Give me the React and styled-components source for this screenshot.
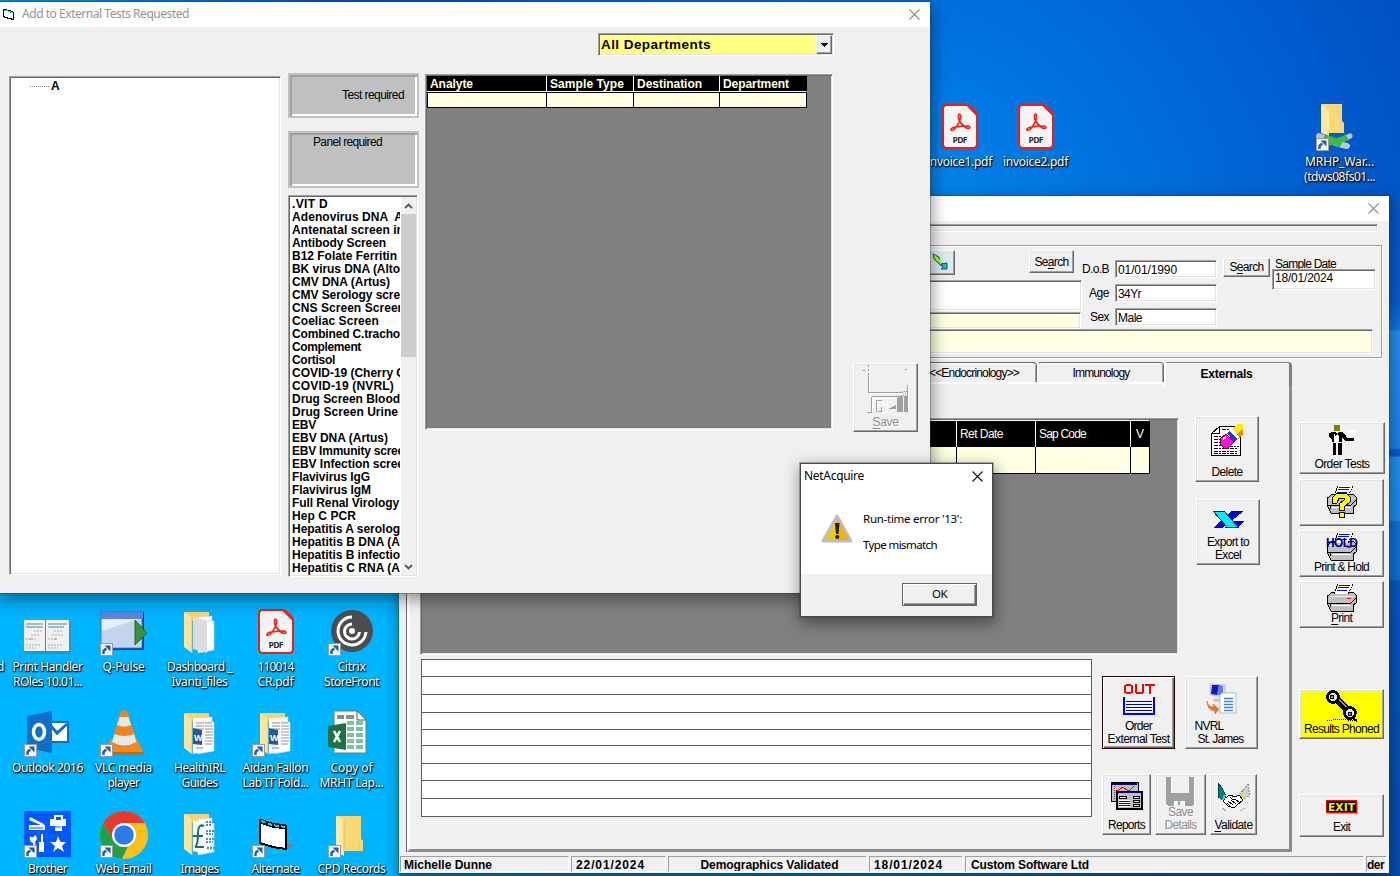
import React, { useLayoutEffect, useRef } from "react";
import styled, { createGlobalStyle, css } from "styled-components";

const sans = `"Liberation Sans", Arial, sans-serif`;
const ui = `"Noto Sans", "Open Sans", sans-serif`;

const Global = createGlobalStyle`
  * { box-sizing: border-box; }
  html, body { margin: 0; padding: 0; overflow: hidden; }
  body { font-family: ${sans}; font-size: 12px; line-height: 13px; color: #000; }
  svg { display: block; flex: none; }
`;

/* ---------- text ---------- */

const FitText = styled.span`
  display: inline-block;
  width: max-content;
  white-space: pre;
  flex: none;
`;

// Spreads its characters so that the text takes the given width.
function Fit({ w, children }) {
  const ref = useRef(null);
  useLayoutEffect(() => {
    const el = ref.current;
    el.style.letterSpacing = "0px";
    const natural = el.getBoundingClientRect().width;
    el.style.letterSpacing = `${(w - natural) / el.textContent.length}px`;
  }, [w, children]);
  return <FitText ref={ref}>{children}</FitText>;
}

/* ---------- shared looks ---------- */

const raised = css`
  border: 1px solid;
  border-color: #fff #696969 #696969 #fff;
  box-shadow: inset -1px -1px #a0a0a0, inset 1px 1px #e3e3e3;
`;
const sunken = css`
  border: 1px solid;
  border-color: #a0a0a0 #fff #fff #a0a0a0;
  box-shadow: inset 1px 1px #696969, inset -1px -1px #e3e3e3;
`;

/* ---------- desktop ---------- */

const Desktop = styled.div`
  position: relative;
  width: 1400px;
  height: 876px;
  overflow: hidden;
  background:
    linear-gradient(180deg, #0058cc 0, #0060d8 105px, #0a7ae6 134px, #1f94f2 135px, #1488ee 252px, #005fd6 254px 260px, #1a94f2 261px, #1a90ee 324px, #0b74dd 326px 384px, #005cc4 385px, #0050b4 680px) 1389px 196px / 11px 680px no-repeat,
    linear-gradient(90deg, #0088c4 0, #0078b8 500px, #004fb0 990px) 399px 872px / 1001px 4px no-repeat,
    linear-gradient(180deg, #00acf6 0, #00b5ff 40px) 0 590px / 400px 286px no-repeat,
    radial-gradient(circle at 880px 260px, #008cee, #0072de 240px, #005ed0 440px, #0050c4 580px, #0090dc 860px);
`;

const IconGrid = styled.div`
  position: absolute;
  left: ${(p) => p.$x}px;
  top: ${(p) => p.$y}px;
  display: grid;
  grid-template-columns: repeat(${(p) => p.$cols}, 76px);
  grid-auto-rows: 101px;
`;

const Shortcut = styled.div`
  display: flex;
  flex-direction: column;
  align-items: center;
  padding-top: 2px;
`;

const IconBox = styled.div`
  position: relative;
  height: 51px;
  margin-bottom: -1px;
`;

const Badge = styled.div`
  position: absolute;
  left: 0;
  top: 34px;
`;

const Caption = styled.div`
  display: flex;
  flex-direction: column;
  align-items: ${(p) => (p.$end ? "flex-end" : "center")};
  width: 76px;
  padding-right: ${(p) => (p.$end ? 7 : 1)}px;
  font: 12px/15px ${ui};
  color: #fff;
  text-shadow: 1px 1px 1px #000, 0 1px 2px rgba(0, 0, 0, 0.85), 0 0 2px rgba(0, 0, 0, 0.4);
`;

const ShortcutArrow = () => (
  <Badge>
    <svg width="13" height="13">
      <rect x=".5" y=".5" width="12" height="12" fill="#f4f6f8" stroke="#9a9a9a" />
      <path d="M3.500 11V9Q3.500 6.500 6.500 6" fill="none" stroke="#2a5a9e" strokeWidth="2.400" />
      <path d="M4.500 2.500H10.500V8.500Z" fill="#2a5a9e" />
    </svg>
  </Badge>
);

function DesktopIcon({ icon, lines = [], link, end }) {
  return (
    <Shortcut>
      <IconBox>
        <svg width="48" height="48" viewBox="0 0 48 48">{icon}</svg>
        {link && <ShortcutArrow />}
      </IconBox>
      <Caption $end={end}>
        {lines.map(([text, w]) => <Fit key={text} w={w}>{text}</Fit>)}
      </Caption>
    </Shortcut>
  );
}

const pdf = (
  <g>
    <path d="M11 1H31L41 11V40Q41 44 37 44H11Q7 44 7 40V5Q7 1 11 1Z" fill="#f5f5f5" stroke="#f21d12" strokeWidth="2" />
    <path d="M31 1L41 11V8L34 1Z" fill="#f21d12" />
    <path d="M15 26C14 23 25 22 32 22C36 23 33 26 29 23C24 19 22 15 22.500 11.500C23 9 25.500 10 24.500 14C23.500 19 18 28 15 26Z" fill="none" stroke="#f0261c" strokeWidth="1.700" />
    <text x="24" y="39" textAnchor="middle" fontFamily="Open Sans, sans-serif" fontWeight="700" fontSize="8.500" textLength="15" fill="#2b2b2b">PDF</text>
  </g>
);

const folder = (
  <g>
    <path d="M8 5H33V28L35 30V40H15Z" fill="#f8d775" />
    <path d="M8 5L16 9V45L8 40Z" fill="#ffe9a6" />
    <path d="M16 9V41" stroke="#e3bd58" />
  </g>
);

const openFolder = (inner) => (
  <g>
    <path d="M8 3H33V12H16Z" fill="#f5d273" />
    <path d="M22 8L36 7V41L22 44Z" fill="#fafafa" stroke="#c9d4da" strokeWidth=".6" />
    <path d="M25 12H38V41L25 43Z" fill="#fff" stroke="#cfd6da" strokeWidth=".6" />
    {inner}
    <path d="M8 3L16 8V44L8 38Z" fill="#ffe39a" />
    <path d="M16 8V44" stroke="#e0b956" strokeWidth=".8" />
  </g>
);

const docLines = (
  <g>
    <path d="M17 8H28V42L17 44Z" fill="#f7f7f7" />
    <path d="M20 13H28M20 16H28M20 19H28M29 13H36M29 16H37M29 19H37M29 22H37M29 25H37M29 28H37M29 31H37M29 34H36M20 38H27" stroke="#777" strokeWidth=".8" />
    <path d="M17 18L26 20V35L17 34Z" fill="#2b579a" />
    <text x="18" y="31" fontFamily="Open Sans, sans-serif" fontWeight="700" fontSize="9" textLength="7" fill="#fff">W</text>
  </g>
);

const art = {
  none: null,
  pdf,
  folder,
  network: (
    <g>
      <path d="M5 0H26V17L28 19V29H12Z" fill="#f9d87a" />
      <path d="M5 0L13 5V32L5 29Z" fill="#ffe8a0" />
      <path d="M3 32L14 36Q20 40 31 42" stroke="#bcc6cd" strokeWidth="6" strokeLinecap="round" fill="none" />
      <path d="M8 39Q24 38 34 32" stroke="#bcc6cd" strokeWidth="5" strokeLinecap="round" fill="none" />
      <path d="M8 33L16 36Q21 39 25 41M10 39Q22 38 31 33" stroke="#36bd3e" strokeWidth="6" fill="none" />
    </g>
  ),
  handler: (
    <g>
      <rect x="1" y="12" width="46" height="33" fill="#4c7484" opacity=".4" />
      <path d="M0 11H21V42H0ZM22 11H45V42H22Z" fill="#f0f0f0" />
      <path d="M2 15H19M24 15H43M2 18H19M24 18H40" stroke="#9fbccb" strokeWidth="2" />
      <path d="M10 22H18M7 26H16M2 30H12M30 22H38M28 26H40M24 30H33M24 36H38M2 36H16M2 39H12M24 39H34" stroke="#aaa" strokeWidth="1" strokeDasharray="2 1" />
      <path d="M5 30H8M30 30H33" stroke="#7c3" />
    </g>
  ),
  pulse: (
    <g>
      <rect x="1" y="3" width="43" height="38" fill="#1d3f7d" />
      <rect x="1" y="3" width="41" height="36" fill="#e8effb" stroke="#3a66c8" />
      <path d="M2 22L41 9V38H2Z" fill="#c3d4ef" />
      <rect x="1" y="3" width="42" height="7" fill="#5a83e0" />
      <path d="M35 11L47 24L35 36Z" fill="#3b923c" stroke="#1c6a26" />
    </g>
  ),
  dashboard: openFolder(<path d="M17 7L31 12V44L17 40Z" fill="#dcdcdf" />),
  citrix: (
    <g fill="none" stroke="#fff" strokeWidth="3">
      <circle cx="24" cy="22" r="21" fill="#4d4d4f" stroke="none" />
      <circle cx="24" cy="22" r="3" fill="#fff" stroke="none" />
      <path d="M24 8A14 14 0 1 0 38 23" />
      <path d="M24 15A7.500 7.500 0 1 0 31.500 23" />
    </g>
  ),
  outlook: (
    <g>
      <rect x="27" y="11" width="18" height="22" fill="#0f6fc6" />
      <path d="M28 13H43V31H28Z" fill="#fff" />
      <path d="M27 16L33 23L43 14" fill="none" stroke="#0f6fc6" strokeWidth="3" />
      <path d="M3 6L28 1V43L3 38Z" fill="#0d6fc8" />
      <ellipse cx="15" cy="22" rx="5.500" ry="7.500" fill="none" stroke="#fff" strokeWidth="3.500" />
    </g>
  ),
  vlc: (
    <g>
      <path d="M10 29H37L44 44H6Z" fill="#f58a14" />
      <path d="M6 42H44V44.500H6Z" fill="#c9680a" />
      <path d="M20.500 2Q24-2 27.500 2L38 35Q24 42 11 35Z" fill="#f2831d" />
      <path d="M19.500 7H28.500L31 15Q24 18 17 15ZM14.500 24Q24 28 34 24L36.500 32Q24 39 12 32Z" fill="#e4e8e9" />
    </g>
  ),
  docs: openFolder(docLines),
  excel: (
    <g>
      <path d="M6 1H29L38 10V43H6Z" fill="#fff" stroke="#607f70" />
      <path d="M29 1V10H38" fill="none" stroke="#555" />
      <path d="M9 5H16V9H9ZM18 5H26V9H18Z" fill="#8b8b8b" />
      <path d="M19 11H26V15H19ZM28 11H35V15H28ZM19 17H26V21H19ZM28 17H35V21H28ZM19 23H26V27H19ZM28 23H35V27H28ZM19 29H26V33H19ZM28 29H35V33H28ZM19 35H26V39H19ZM28 35H35V39H28Z" fill="#7ec19c" />
      <path d="M0 16L18 13V40L0 37Z" fill="#1e7245" />
      <path d="M6 21L12 32M12 21L6 32" stroke="#fff" strokeWidth="2.600" />
    </g>
  ),
  brother: (
    <g>
      <rect width="47" height="46" fill="#0058ff" />
      <g fill="#fff" stroke="none">
        <path d="M5 14H21V19H5ZM6 6L20 13L19 15L5 9ZM30 4H39V8H42V15H38V20H31V15H26V8H30ZM34 25L36.500 31H42L38 35L40 41L34 37L29 41L31 35L26 31H32Z" />
        <path d="M6 25Q9 28 11 24Q15 27 11 31L13 40L10 42L9 32Q5 31 6 25ZM17 23H19V31H20V41H15V31H17Z" />
      </g>
      <path d="M32 6H37V9H32ZM31 13H38" fill="#0058ff" />
      <path d="M6 17H19M31 16H37" stroke="#0058ff" />
    </g>
  ),
  chrome: (
    <g>
      <circle cx="24" cy="24" r="24" fill="#fbc116" />
      <path d="M3.200 12A24 24 0 0 1 44.800 12H24L13.600 30Z" fill="#e33b2e" />
      <path d="M3.200 12L13.600 30A12 12 0 0 0 28 35L22 48A24 24 0 0 1 3.200 12Z" fill="#23a047" />
      <circle cx="24" cy="24" r="12" fill="#fff" />
      <circle cx="24" cy="24" r="9.800" fill="#2b7de9" />
    </g>
  ),
  images: openFolder(
    <g>
      <path d="M17 9L29 13V43L17 40Z" fill="#f8faf8" />
      <path d="M28 15Q22 12 22 23Q22 34 19 36M17 25H27M19 36H28" fill="none" stroke="#1e6f60" strokeWidth="2" />
      <path d="M30 11H38M30 14H36M30 20H38M30 23H37M30 28H38M30 31H37" stroke="#4f8dc0" strokeDasharray="2 1" strokeWidth="2" />
      <path d="M31 37H38" stroke="#4faa80" strokeWidth="3" strokeDasharray="2 1" />
    </g>
  ),
  alternate: (
    <g shapeRendering="crispEdges">
      <path d="M30 32L43 33L34 39Z" fill="#7b8287" />
      <path d="M8 9L20 13L34 15V38L21 36L8 32Z" fill="#fff" stroke="#000" strokeWidth="2" />
      <path d="M8 10L20 14L34 16" fill="none" stroke="#000" strokeWidth="5" />
      <path d="M9 10L20 14L33 16" fill="none" stroke="#0ed8d8" strokeWidth="2" strokeDasharray="5 2" />
    </g>
  ),
};

/* ---------- windows ---------- */

const Window = styled.section`
  position: absolute;
  left: ${(p) => p.$x}px;
  top: ${(p) => p.$y}px;
  width: ${(p) => p.$w}px;
  height: ${(p) => p.$h}px;
  display: flex;
  flex-direction: column;
  background: #f0f0f0;
  box-shadow: 0 0 0 1px rgba(40, 60, 80, 0.35), 1px 5px 14px 2px rgba(0, 0, 0, 0.38);
`;

const TitleBar = styled.header`
  flex: none;
  display: flex;
  align-items: center;
  height: 25px;
  padding: 0 10px 1px 2px;
  background: #fff;
  color: #949494;
  font: 12px/16px ${ui};
`;
const TitleIcon = styled.div`
  width: 20px;
`;
const Spacer = styled.div`
  flex: 1;
`;

const Close = ({ color = "#8d8d8d", size = 11 }) => (
  <svg width={size} height={size} viewBox="0 0 11 11">
    <path d="M.5.5L10.500 10.500M10.500.5L.5 10.500" stroke={color} strokeWidth="1.100" />
  </svg>
);

const PushButton = styled.div`
  ${raised}
  flex: none;
  display: flex;
  flex-direction: column;
  align-items: center;
  width: ${(p) => p.$w}px;
  height: ${(p) => p.$h}px;
  padding-top: ${(p) => p.$pt - 1}px;
  margin-bottom: ${(p) => p.$mb || 0}px;
  background: ${(p) => p.$bg || "#f0f0f0"};
  color: ${(p) => (p.$disabled ? "#8c8c8c" : "#000")};
  text-shadow: ${(p) => (p.$disabled ? "1px 1px #fff" : "none")};
  ${(p) => p.$focus && css`
    border-color: #200808;
    box-shadow: inset 1px 1px #fff, inset -1px -1px #696969, inset -2px -2px #a0a0a0;
  `}
  u { text-underline-offset: 2px; text-decoration-thickness: 1px; }
`;
const ButtonLines = styled.div`
  display: flex;
  flex-direction: column;
  align-items: center;
  margin-top: ${(p) => p.$gap}px;
`;

function IconButton({ icon, gap = 0, children, ...rest }) {
  return (
    <PushButton {...rest}>
      {icon}
      <ButtonLines $gap={gap}>{children}</ButtonLines>
    </PushButton>
  );
}

/* ---------- toolbar drawings ---------- */

const Pix = ({ w, h, children }) => (
  <svg width={w} height={h} viewBox={`0 0 ${w} ${h}`} shapeRendering="crispEdges">{children}</svg>
);

const DeleteIcon = () => (
  <Pix w={32} h={33}>
    <path d="M0.500 31.500V9.500L8.500 2.500H29.500V31.500Z" fill="#fff" stroke="#000" />
    <path d="M1 9.500H8.500V2" fill="none" stroke="#000" />
    <path d="M11 5.500H18M3 12.500H10M3 15.500H9M3 18.500H10M3 21.500H12M3 24.500H26M3 27.500H26M3 29.500H26M18 22.500H28" stroke="#000" strokeDasharray="4 1 2 1" />
    <path d="M21 5L27 0H32V9L24 16Z" fill="#f8f000" />
    <path d="M27 15L32 10V5L22 14Z" fill="#f08020" />
    <path d="M17 8L21 4L28 13L24 17Z" fill="#fff" />
    <path d="M16 9L18 7L26 15L23 18Z" fill="#2038d8" />
    <path d="M15 10L23 18L17 24H13L9 20V15Z" fill="#ff10e0" stroke="#8a0020" />
    <path d="M12 15L15 13" stroke="#fff" strokeWidth="2" />
  </Pix>
);

const ExcelX = () => (
  <Pix w={33} h={18}>
    <path d="M20 1H31L11 17H3Z" fill="#0000e0" stroke="#000080" />
    <path d="M20 11H32L26 17H14Z" fill="#0000e0" stroke="#000080" />
    <path d="M1 1H12L26 17H15Z" fill="#00f0ff" stroke="#003070" />
  </Pix>
);

const Waiter = () => (
  <Pix w={28} h={33}>
    <circle cx="9" cy="4" r="3.500" fill="#808000" />
    <path d="M4 8H14L18 11L19 14H26V17H17L14 14V18H4V15L1 13V9Z" fill="#000" />
    <path d="M7 8H11V20H6V12Z" fill="#fff" />
    <path d="M7 8L9 10L11 8V12L9 10L7 12Z" fill="#000" stroke="#000" strokeWidth=".5" />
    <path d="M5 19H8V31H5ZM10 19H14V31H10Z" fill="#000" />
    <path d="M19 6H27V13H20Z" fill="#fff" />
  </Pix>
);

const printerShape = (
  <g>
    <path d="M3 12L6 9H27L30 12V20L27 22V28H5L3 24L1 20V13Z" fill="#c0c0c0" stroke="#000" />
    <path d="M2 20H25L30 15M4 21V24" fill="none" stroke="#000" />
    <path d="M6 22.500H25" stroke="#fff" />
    <path d="M4 13.500H27" stroke="#f0f0f0" />
    <path d="M8 11L12 1H27L22 11Z" fill="#fff" />
    <path d="M8 11L12 1M27 1L22 11" fill="none" stroke="#000" strokeDasharray="2 1" />
    <path d="M13 2.500H24M12 4.500H23M11 7.500H21" stroke="#0000ff" />
    <path d="M21 15.500H25" stroke="#f00" />
  </g>
);
const Printer = () => <Pix w={32} h={29}>{printerShape}</Pix>;
const HoldPrinter = () => (
  <Pix w={34} h={29}>
    <g transform="translate(1 0)">{printerShape}</g>
    <text x="1" y="15" fontFamily="Liberation Sans, sans-serif" fontWeight="700" fontSize="12" textLength="32" fill="#000088">HOLD</text>
  </Pix>
);
const HelpPrinter = () => (
  <Pix w={32} h={33}>
    {printerShape}
    <path d="M6 18V13L11 8H20L24 12V17L18 22V25H13V19L18 15V13H13L11 18Z" fill="#ff0" stroke="#000" />
    <path d="M13 27H18V32H13Z" fill="#ff0" stroke="#000" />
  </Pix>
);

const OutTray = () => (
  <Pix w={32} h={32}>
    <path d="M3 1H8V3H3ZM3 9H8V11H3ZM1 2H3V10H1ZM8 2H10V10H8Z" fill="#f00" />
    <path d="M12 1H14V10H12ZM19 1H21V10H19ZM13 9H20V11H13ZM22 1H32V3H22ZM26 1H28V11H26Z" fill="#f00" />
    <path d="M1 14V31H31V14" fill="none" stroke="#0000f0" strokeWidth="2" />
    <path d="M3 18.500H29M3 21.500H29M3 24.500H29M3 27.500H29" stroke="#0000c0" />
    <path d="M3 19.500H29M3 22.500H29M3 25.500H29M3 28.500H29" stroke="#fff" />
  </Pix>
);

const Transfer = () => (
  <svg width="32" height="32">
    <path d="M4 1L19 2V14L4 12Z" fill="#d5d9e8" stroke="#a6abc0" strokeWidth=".6" />
    <path d="M6 2H13L11 12L5 11Z" fill="#0c1ac0" /><path d="M13 2L17 3V12L11 12Z" fill="#5f7bf0" />
    <path d="M7 16L16 15V18L8 19Z" fill="#c8c8cc" />
    <path d="M16 10H30V30H14V12Z" fill="#fff" stroke="#b6bcc6" />
    <path d="M18 15.500H27M18 18.500H27M18 21.500H27M18 24.500H27M18 27.500H27" stroke="#3f86c2" strokeWidth="1.300" />
    <path d="M1 18Q2 24 8 24L7 21L13 26L9 31V28Q1 27 1 18Z" fill="#f07830" stroke="#c85a20" strokeWidth=".5" />
  </svg>
);

const ReportsIcon = () => (
  <Pix w={33} h={29}>
    <rect x="1" y="1" width="27" height="19" fill="#c0c0c0" stroke="#000" />
    <path d="M2 2.500H27" stroke="#000080" strokeWidth="2" />
    <path d="M6 10L9 9L13 6L17 9L20 9L24 5" stroke="#f00" fill="none" />
    <path d="M4 5V19" stroke="#555" strokeDasharray="1 1" />
    <rect x="7" y="11" width="25" height="17" fill="#c0c0c0" stroke="#000" strokeWidth="2" />
    <path d="M8 11.500H31" stroke="#000080" />
    <path d="M9.500 15.500H16.500V17.500H9.500ZM23.500 15.500H29.500V17.500H23.500ZM23.500 19.500H29.500V21.500H23.500ZM23.500 23.500H29.500V25.500H23.500Z" fill="#ddd" stroke="#000" />
    <path d="M9 19H20V26H9Z" fill="#fff" /><path d="M9 20.500H20M9 22.500H20M9 24.500H20" stroke="#00f" />
  </Pix>
);

const FloppyGray = () => (
  <Pix w={29} h={30}>
    <g fill="#fff" transform="translate(1 1)">
      <path d="M0 0H5V15H23V0H28V28H18V22H13V28H11V22H8V28H2L0 26Z" />
    </g>
    <path d="M0 0H5V16H23V0H28V27L27 29H19V24H8V29H2L0 27Z" fill="#a0a0a0" />
    <path d="M8 24H11V29H8ZM14 24H19V29H14Z" fill="#fff" />
    <path d="M12 24H14V28H12Z" fill="#a0a0a0" />
  </Pix>
);

const Handshake = () => (
  <Pix w={33} h={29}>
    <path d="M1 0L5 5L9 13L6 17L1 14Z" fill="#008080" stroke="#004848" />
    <path d="M31 1L32 8V13L27 16L23 11L27 6Z" fill="#d0d0d0" stroke="#888" strokeDasharray="2 1" />
    <path d="M22 11L28 16" stroke="#e8e000" strokeWidth="2" />
    <path d="M8 15L13 12L18 14L22 12L26 17L20 22L17 25L11 23L6 18Z" fill="#fff" stroke="#000" />
    <path d="M11 18L16 22M14 17L19 21M13 14L16 17L18 16L22 19M10 20L14 24" fill="none" stroke="#000" />
    <path d="M8 12L6 17" stroke="#3fe0e0" strokeWidth="2" />
    <path d="M5 25L9 28M28 25L23 28" stroke="#aaa" />
  </Pix>
);

const Phone = () => (
  <Pix w={32} h={32}>
    <path d="M8 6L25 24" stroke="#000" strokeWidth="7" />
    <path d="M11 7L25 22" stroke="#999" strokeWidth="1.500" />
    <circle cx="7" cy="7" r="5.500" fill="#e8e8e8" stroke="#000" strokeWidth="2.600" />
    <circle cx="6" cy="7" r="2" fill="#888" stroke="#000" />
    <circle cx="24" cy="23" r="5.500" fill="#e8e8e8" stroke="#000" strokeWidth="2.600" />
    <circle cx="24" cy="24" r="2" fill="#888" stroke="#000" />
    <path d="M1 30.500H7M7 29.500H22M22 30.500H31" stroke="#000" strokeDasharray="1 1" />
    <path d="M27 28L31 31" stroke="#000" strokeWidth="2" />
  </Pix>
);

const ExitSign = () => (
  <Pix w={32} h={14}>
    <path d="M2 13.500H31.500V2" fill="none" stroke="#aaa" />
    <rect x="0.500" y="0.500" width="30" height="12" fill="#000" stroke="#f00" />
    <text x="2" y="10.500" fontFamily="DejaVu Sans, sans-serif" fontWeight="700" fontSize="10" textLength="27" lengthAdjust="spacingAndGlyphs" fill="#f8f000">EXIT</text>
  </Pix>
);

const SaveGhost = () => (
  <Pix w={48} h={48}>
    <path d="M7.500 2V28.500H41M46.500 21V48M10 33.500H38M10.500 33V46.500L6 47.500M15.500 36.500H20M15.500 36V47M25.500 36V47.500H20M21.500 36V40" fill="none" stroke="#fff" />
    <path d="M6.500 10V27.500H41M45.500 20V48M10 31.500H38M9.500 32V47.500H5M14.500 35.500H20M14.500 35V47M19.500 42V46.500H16" fill="none" stroke="#a0a0a0" />
    <path d="M6.500 0V10M1 5.500H4M43 4.500H45" fill="none" stroke="#a0a0a0" strokeDasharray="2 2" />
    <path d="M36 31H41V47H35V36ZM42 31H46V47H42ZM26 44L34 40V44Z" fill="#a0a0a0" />
    <path d="M40 26.500H46M41 28.500H45M39 30.500H46" stroke="#a0a0a0" strokeDasharray="1 1" />
  </Pix>
);

const ArrowIcon = () => (
  <svg width="18" height="18">
    <path d="M1 1L7 4L8 8L12 12L9 13L5 9L2 6Z" fill="#70e040" stroke="#186820" />
    <path d="M2 2L12 12M5 4V8M8 6V9" stroke="#e8f820" />
    <path d="M15 10V16H9L11 14L9 11Z" fill="#30b0c8" stroke="#0c5080" />
  </svg>
);

/* ---------- patient window ---------- */

const Groove = styled.div`
  ${sunken}
  flex: none;
  width: 971px;
  height: 8px;
  margin: 3px 0 0 8px;
`;
const Group = styled.div`
  flex: none;
  width: 975px;
  height: 113px;
  margin: 13px 0 1px 8px;
  border: 1px solid #a0a0a0;
  box-shadow: 1px 1px #fff, inset 1px 1px #fff;
`;
const GroupRow = styled.div`
  display: flex;
  align-items: flex-start;
  height: 83px;
`;
const PatientCol = styled.div`
  width: 674px;
  padding-top: 4px;
`;
const PatientTools = styled.div`
  display: flex;
  justify-content: flex-end;
  gap: 74px;
  height: 24px;
  padding-right: 8px;
  margin-bottom: 6px;
`;
const Well = styled.div`
  ${sunken}
  flex: none;
  display: flex;
  align-items: ${(p) => (p.$top ? "flex-start" : "center")};
  width: ${(p) => p.$w}px;
  height: ${(p) => p.$h}px;
  padding: ${(p) => (p.$top ? "2px 2px 0" : "2px 2px 0")};
  margin-bottom: ${(p) => p.$mb || 0}px;
  background: ${(p) => p.$bg || "#fff"};
`;
const Facts = styled.div`
  display: grid;
  grid-template-columns: 27px 102px;
  grid-auto-rows: 18px;
  gap: 6px 6px;
  padding-top: 14px;
  justify-items: end;
  align-items: center;
`;
const SearchSlot = styled.div`
  padding: 12px 0 0 6px;
`;
const SampleCol = styled.div`
  display: flex;
  flex-direction: column;
  padding: 12px 0 0 2px;
`;
const SampleLabel = styled.div`
  height: 11px;
  padding-left: 3px;
`;

const Main = styled.div`
  flex: none;
  display: flex;
  height: 490px;
  margin: 3px 0 0 8px;
`;
const Tabs = styled.div`
  display: flex;
  flex-direction: column;
  width: 885px;
`;
const TabStrip = styled.div`
  display: flex;
  justify-content: flex-end;
  height: 20px;
`;
const Tab = styled.div`
  display: flex;
  align-items: center;
  justify-content: center;
  width: ${(p) => p.$w}px;
  height: ${(p) => (p.$active ? 24 : 21)}px;
  padding: 1px 0 0 1px;
  border: 1px solid #696969;
  border-left-color: #fff;
  border-radius: 4px 4px 0 0;
  box-shadow: inset 0 1px #fff, inset -1px 0 #a0a0a0;
  background: #f0f0f0;
  ${(p) => p.$active && css`
    position: relative;
    font-weight: 700;
    padding: 0 2px 1px 0;
    border-width: 1px 3px 0 2px;
    border-color: #808080 #808080 transparent #fff;
    box-shadow: inset 0 1px #fff;
  `}
`;
const TabBody = styled.div`
  flex: 1;
  padding: 32px 0 0 10px;
  border-style: solid;
  border-width: 2px 3px 3px;
  border-color: #fff #8c8c8c #8c8c8c #fff;
  box-shadow: -1px 0 #696969;
`;
const PanelRow = styled.div`
  display: flex;
  align-items: flex-start;
  height: ${(p) => p.$h}px;
  margin-bottom: 4px;
`;
const ResultGrid = styled.div`
  ${sunken}
  flex: none;
  width: ${(p) => p.$w}px;
  height: ${(p) => p.$h}px;
  margin-top: ${(p) => p.$mt}px;
  padding: 1px;
  background: #808080;
`;
const GridLine = styled.div`
  display: grid;
  grid-template-columns: ${(p) => p.$cols};
  width: max-content;
  height: ${(p) => p.$h}px;
`;
const HeadCell = styled.div`
  display: flex;
  align-items: center;
  padding: ${(p) => p.$pad || "0 0 0 3px"};
  overflow: hidden;
  background: #000;
  color: #ffffe1;
  font-weight: ${(p) => (p.$bold ? 700 : 400)};
  border-right: 1px solid #fff;
  ${(p) => (p.$bold ? "border-bottom: 1px solid #fff; padding: 1px 0 0 3px;" : "border-top: 1px solid #fff;")}
  &:last-child { border-right-color: #000; }
`;
const Cell = styled.div`
  background: #ffffe1;
  border: solid #000;
  border-width: ${(p) => (p.$framed ? "1px 1px 1px 0" : "0 1px 1px 0")};
  &:first-child { border-left-width: 1px; }
`;
const ActionCol = styled.div`
  padding-left: 16px;
`;
const Nudge = styled.div`
  padding-left: ${(p) => p.$x}px;
`;
const Ledger = styled.div`
  display: grid;
  grid-template-rows: 17px 18px 18px 17px 16px 18px 17px 18px 18px;
  width: 671px;
  height: 158px;
  margin-left: 1px;
  border: solid #5c5c5c;
  border-width: 1px 1px 0;
`;
const LedgerRow = styled.div`
  background: #fff;
  border-bottom: 1px solid #5c5c5c;
`;
const Actions = styled.div`
  padding: 17px 0 0 10px;
`;
const ActionRow = styled.div`
  display: flex;
  gap: ${(p) => p.$gap}px;
  margin-bottom: 25px;
`;
const SideBar = styled.div`
  display: flex;
  flex-direction: column;
  padding: 60px 0 0 7px;
`;
const LeftLines = styled.div`
  display: flex;
  flex-direction: column;
  align-items: flex-start;
  width: 52px;
  margin-right: 2px;
`;

const Status = styled.footer`
  flex: none;
  display: grid;
  grid-template-columns: 169px 95px 199px 94px 399px 21px;
  gap: 2px;
  height: 16px;
  margin: 4px 0 0 1px;
`;
const StatusCell = styled.div`
  display: flex;
  align-items: center;
  justify-content: ${(p) => (p.$center ? "center" : "flex-start")};
  padding: 2px 0 0 ${(p) => p.$pad ?? 4}px;
  overflow: hidden;
  border: 1px solid;
  border-color: #a0a0a0 #fff #fff #a0a0a0;
  font-weight: 700;
`;

function PatientWindow() {
  const cols = "535px 79px 95px 19px";
  return (
    <Window $x={399} $y={196} $w={990} $h={677}>
      <TitleBar><Spacer /><Close /></TitleBar>
      <Groove />
      <Group>
        <GroupRow>
          <PatientCol>
            <PatientTools>
              <PushButton $w={28} $h={25} $pt={3} $bg="#dce8f0"><ArrowIcon /></PushButton>
              <PushButton $w={45} $h={23} $pt={6}><Fit w={34}>Se<u>a</u>rch</Fit></PushButton>
            </PatientTools>
            <Well $w={674} $h={31} $mb={1} />
            <Well $w={673} $h={17} $bg="#ffffe1" />
          </PatientCol>
          <Facts>
            <Fit w={27}>D.o.B</Fit><Well $w={102} $h={18}><Fit w={59}>01/01/1990</Fit></Well>
            <Fit w={20}>Age</Fit><Well $w={102} $h={18}><Fit w={23}>34Yr</Fit></Well>
            <Fit w={19}>Sex</Fit><Well $w={102} $h={18}><Fit w={24}>Male</Fit></Well>
          </Facts>
          <SearchSlot>
            <PushButton $w={47} $h={19} $pt={3}><Fit w={34}>S<u>e</u>arch</Fit></PushButton>
          </SearchSlot>
          <SampleCol>
            <SampleLabel><Fit w={61}>Sample Date</Fit></SampleLabel>
            <Well $w={104} $h={21} $top><Fit w={58}>18/01/2024</Fit></Well>
          </SampleCol>
        </GroupRow>
        <Well $w={965} $h={25} $bg="#ffffe1" />
      </Group>
      <Main>
        <Tabs>
          <TabStrip>
            <Tab $w={127}><Fit w={90}>{"<<Endocrinology>>"}</Fit></Tab>
            <Tab $w={127}><Fit w={57}>Immunology</Fit></Tab>
            <Tab $w={128} $active><Fit w={52}>Externals</Fit></Tab>
          </TabStrip>
          <TabBody>
            <PanelRow $h={239}>
              <ResultGrid $w={759} $h={237} $mt={2}>
                <GridLine $cols={cols} $h={27}>
                  <HeadCell /><HeadCell><Fit w={43}>Ret Date</Fit></HeadCell>
                  <HeadCell><Fit w={47}>Sap Code</Fit></HeadCell><HeadCell $pad="0 0 0 5px">V</HeadCell>
                </GridLine>
                <GridLine $cols={cols} $h={27}><Cell /><Cell /><Cell /><Cell /></GridLine>
              </ResultGrid>
              <ActionCol>
                <IconButton $w={64} $h={66} $pt={8} $mb={17} gap={9} icon={<DeleteIcon />}><Fit w={31}>Delete</Fit></IconButton>
                <Nudge $x={1}>
                  <IconButton $w={64} $h={66} $pt={11} gap={8} icon={<ExcelX />}><Fit w={42}>Export to</Fit><Fit w={26}>Excel</Fit></IconButton>
                </Nudge>
              </ActionCol>
            </PanelRow>
            <PanelRow $h={176}>
              <Ledger>{Array.from({ length: 9 }, (_, i) => <LedgerRow key={i} />)}</Ledger>
              <Actions>
                <ActionRow $gap={10}>
                  <IconButton $w={73} $h={73} $pt={7} $focus gap={5} icon={<OutTray />}>
                    <Fit w={27}>Order</Fit><Fit w={62}>External Test</Fit>
                  </IconButton>
                  <IconButton $w={73} $h={73} $pt={7} gap={5} icon={<Transfer />}>
                    <LeftLines><Fit w={29}>NVRL</Fit><Nudge $x={3}><Fit w={46}>St. James</Fit></Nudge></LeftLines>
                  </IconButton>
                </ActionRow>
                <ActionRow $gap={4}>
                  <IconButton $w={49} $h={61} $pt={7} gap={9} icon={<ReportsIcon />}><Fit w={37}>Reports</Fit></IconButton>
                  <IconButton $w={51} $h={61} $pt={3} $disabled gap={-1} icon={<FloppyGray />}><Fit w={25}>Save</Fit><Fit w={32}>Details</Fit></IconButton>
                  <IconButton $w={47} $h={61} $pt={9} gap={7} icon={<Handshake />}><Fit w={38}><u>V</u>alidate</Fit></IconButton>
                </ActionRow>
              </Actions>
            </PanelRow>
          </TabBody>
        </Tabs>
        <SideBar>
          <IconButton $w={86} $h={52} $pt={2} $mb={5} gap={1} icon={<Waiter />}><Fit w={55}>Order Tests</Fit></IconButton>
          <IconButton $w={85} $h={47} $pt={6} $mb={4} icon={<HelpPrinter />} />
          <IconButton $w={85} $h={47} $pt={2} $mb={4} icon={<HoldPrinter />}><Fit w={55}>Print &amp; Hold</Fit></IconButton>
          <IconButton $w={85} $h={47} $pt={2} $mb={61} icon={<Printer />}><Fit w={21}><u>P</u>rint</Fit></IconButton>
          <IconButton $w={85} $h={50} $pt={1} $mb={55} gap={1} $bg="#ff0" icon={<Phone />}><Fit w={75}>Results Phoned</Fit></IconButton>
          <IconButton $w={85} $h={43} $pt={6} gap={7} icon={<ExitSign />}><Fit w={17}>Exit</Fit></IconButton>
        </SideBar>
      </Main>
      <Status>
        <StatusCell $pad={3}><Fit w={88}>Michelle Dunne</Fit></StatusCell>
        <StatusCell><Fit w={69}>22/01/2024</Fit></StatusCell>
        <StatusCell $center><Fit w={138}>Demographics Validated</Fit></StatusCell>
        <StatusCell><Fit w={69}>18/01/2024</Fit></StatusCell>
        <StatusCell $pad={5}><Fit w={118}>Custom Software Ltd</Fit></StatusCell>
        <StatusCell $pad={0}><Fit w={17}>der</Fit></StatusCell>
      </Status>
    </Window>
  );
}

/* ---------- external tests window ---------- */

const Combo = styled.div`
  ${sunken}
  flex: none;
  display: flex;
  align-items: center;
  width: 236px;
  height: 23px;
  margin: 6px 0 17px 598px;
  padding: 1px 1px 1px 2px;
  background: #ffff80;
  font-size: 13.5px;
  font-weight: 700;
`;
const ComboArrow = styled.div`
  ${raised}
  display: flex;
  align-items: center;
  justify-content: center;
  width: 16px;
  height: 19px;
  margin-left: auto;
  background: #f0f0f0;
`;
const Columns = styled.div`
  display: flex;
  align-items: flex-start;
`;
const Tree = styled.div`
  ${sunken}
  flex: none;
  display: flex;
  align-items: flex-start;
  width: 272px;
  height: 499px;
  margin: 3px 7px 0 9px;
  padding: 3px 0 0 20px;
  background: #fff;
  font-weight: 700;
`;
const Branch = styled.div`
  width: 19px;
  margin: 6px 2px 0 0;
  border-top: 1px dotted #808080;
`;
const PickCol = styled.div`
  flex: none;
  display: flex;
  flex-direction: column;
  width: 131px;
  margin-right: 6px;
`;
const GrayButton = styled.div`
  flex: none;
  height: ${(p) => p.$h}px;
  margin-bottom: ${(p) => p.$mb}px;
  padding: ${(p) => p.$pad};
  border: 2px solid #c0c0c0;
  background: #c0c0c0;
  box-shadow: inset 2px 2px #a0a0a0, inset -2px -2px #fff;
`;
const ListBox = styled.div`
  ${sunken}
  display: flex;
  justify-content: space-between;
  width: 130px;
  height: 382px;
  padding: 1px;
  background: #fff;
`;
const Items = styled.div`
  width: 110px;
  padding: 1px 0 0 2px;
  overflow: hidden;
  font-weight: 700;
`;
const Item = styled.div`
  height: 13px;
`;
const ScrollBar = styled.div`
  display: flex;
  flex-direction: column;
  align-items: center;
  justify-content: space-between;
  width: 15px;
  padding: 6px 0 5px;
  background: #f0f0f0;
`;
const Thumb = styled.div`
  width: 15px;
  height: 143px;
  margin: 5px 0 auto;
  background: #cdcdcd;
`;
const SaveSlot = styled.div`
  padding: 290px 0 0 20px;
`;

const tests = [
  [".VIT D", 36], ["Adenovirus DNA  A", 111], ["Antenatal screen in", 112], ["Antibody Screen", 94],
  ["B12 Folate Ferritin", 105], ["BK virus DNA (Alto", 108], ["CMV DNA (Artus)", 98], ["CMV Serology scre", 108],
  ["CNS Screen Screen", 113], ["Coeliac Screen", 87], ["Combined C.tracho", 108], ["Complement", 69],
  ["Cortisol", 43], ["COVID-19 (Cherry C", 113], ["COVID-19 (NVRL)", 102], ["Drug Screen Blood", 108],
  ["Drug Screen Urine", 106], ["EBV", 24], ["EBV DNA (Artus)", 96], ["EBV Immunity scree", 112],
  ["EBV Infection scree", 112], ["Flavivirus IgG", 78], ["Flavivirus IgM", 79], ["Full Renal Virology", 107],
  ["Hep C PCR", 64], ["Hepatitis A serolog", 108], ["Hepatitis B DNA (A", 108], ["Hepatitis B infectio", 108],
  ["Hepatitis C RNA (A", 108],
];

const Chevron = ({ down }) => (
  <svg width="9" height="6">
    <path d={down ? "M1 1L4.500 4.500L8 1" : "M1 5L4.500 1.500L8 5"} fill="none" stroke="#5a5a5a" strokeWidth="1.800" />
  </svg>
);

function TestsWindow() {
  const cols = "120px 87px 86px 87px";
  return (
    <Window $x={0} $y={2} $w={930} $h={591}>
      <TitleBar>
        <TitleIcon>
          <Pix w={14} h={13}>
            <path d="M10 8L14 9L11 11Z" fill="#777" />
            <path d="M1.500 1.500L7 2.500L11.500 4.500V11.500L7 10.500L1.500 8.500Z" fill="#fff" stroke="#000" strokeWidth="1.300" />
            <path d="M2 2.500L6 3L11 5" stroke="#18c8c8" fill="none" />
          </Pix>
        </TitleIcon>
        <Fit w={167}>Add to External Tests Requested</Fit>
        <Spacer />
        <Close />
      </TitleBar>
      <Combo>
        <Fit w={110}>All Departments</Fit>
        <ComboArrow><Pix w={7} h={4}><path d="M0 0H7L3.500 4Z" /></Pix></ComboArrow>
      </Combo>
      <Columns>
        <Tree><Branch /><span>A</span></Tree>
        <PickCol>
          <GrayButton $h={45} $mb={13} $pad="14px 0 0 52px"><Fit w={62}>Test required</Fit></GrayButton>
          <GrayButton $h={57} $mb={7} $pad="3px 0 0 23px"><Fit w={69}>Panel required</Fit></GrayButton>
          <ListBox>
            <Items>{tests.map(([t, w]) => <Item key={t}><Fit w={w}>{t}</Fit></Item>)}</Items>
            <ScrollBar><Chevron /><Thumb /><Chevron down /></ScrollBar>
          </ListBox>
        </PickCol>
        <ResultGrid $w={408} $h={356} $mt={1}>
          <GridLine $cols={cols} $h={16}>
            <HeadCell $bold><Fit w={43}>Analyte</Fit></HeadCell>
            <HeadCell $bold><Fit w={74}>Sample Type</Fit></HeadCell>
            <HeadCell $bold><Fit w={65}>Destination</Fit></HeadCell>
            <HeadCell $bold><Fit w={66}>Department</Fit></HeadCell>
          </GridLine>
          <GridLine $cols={cols} $h={16}><Cell $framed /><Cell $framed /><Cell $framed /><Cell $framed /></GridLine>
        </ResultGrid>
        <SaveSlot>
          <IconButton $w={65} $h={69} $pt={2} $disabled gap={3} icon={<SaveGhost />}><Fit w={26}><u>S</u>ave</Fit></IconButton>
        </SaveSlot>
      </Columns>
    </Window>
  );
}

/* ---------- error dialog ---------- */

const Dialog = styled(Window)`
  border: 1px solid #4a4a4a;
  font: 11.5px/16px ${ui};
`;
const DialogTitle = styled.header`
  display: flex;
  align-items: center;
  height: 25px;
  padding: 0 9px 1px 3px;
  background: #fff;
  font-size: 12px;
`;
const DialogBody = styled.div`
  display: flex;
  gap: 9px;
  height: 85px;
  padding: 22px 0 0 20px;
  background: #fff;
`;
const DialogText = styled.div`
  display: flex;
  flex-direction: column;
  align-items: flex-start;
  gap: 10px;
`;
const WarnSlot = styled.div`
  padding-top: 3px;
`;
const DialogFoot = styled.div`
  display: flex;
  justify-content: flex-end;
  padding: 9px 15px 0 0;
`;
const OkButton = styled.div`
  display: flex;
  align-items: center;
  justify-content: center;
  width: 75px;
  height: 23px;
  padding-bottom: 1px;
  border: 1px solid #646464;
  box-shadow: inset 1px 1px #fff, inset -1px -1px #696969, inset -2px -2px #a0a0a0;
`;

function ErrorDialog() {
  return (
    <Dialog $x={800} $y={463} $w={193} $h={154}>
      <DialogTitle><Fit w={60}>NetAcquire</Fit><Spacer /><Close color="#111" /></DialogTitle>
      <DialogBody>
        <WarnSlot>
          <svg width="33" height="29">
            <path d="M16 2L30 27H2Z" fill="#f8c80c" stroke="#bdbdbd" strokeWidth="3" strokeLinejoin="round" />
            <path d="M16 4L28 26H16Z" fill="#f0a800" opacity=".65" />
            <path d="M14 9H18.500L17.500 20H15Z" fill="#1c1c1c" />
            <circle cx="16.200" cy="23" r="2.100" fill="#1c1c1c" />
          </svg>
        </WarnSlot>
        <DialogText><Fit w={99}>Run-time error '13':</Fit><Fit w={74}>Type mismatch</Fit></DialogText>
      </DialogBody>
      <DialogFoot><OkButton><Fit w={15}>OK</Fit></OkButton></DialogFoot>
    </Dialog>
  );
}

const shortcuts = [
  { icon: "none", lines: [["d", 6]], end: true },
  { icon: "handler", lines: [["Print Handler", 70], ["ROles 10.01...", 69]] },
  { icon: "pulse", lines: [["Q-Pulse", 42]], link: true },
  { icon: "dashboard", lines: [["Dashboard _", 65], ["Ivanti_files", 56]] },
  { icon: "pdf", lines: [["110014", 36], ["CR.pdf", 36]] },
  { icon: "citrix", lines: [["Citrix", 28], ["StoreFront", 55]], link: true },
  { icon: "none" },
  { icon: "outlook", lines: [["Outlook 2016", 71]], link: true },
  { icon: "vlc", lines: [["VLC media", 57], ["player", 32]], link: true },
  { icon: "docs", lines: [["HealthIRL", 51], ["Guides", 36]] },
  { icon: "docs", lines: [["Aidan Fallon", 66], ["Lab IT Fold...", 66]], link: true },
  { icon: "excel", lines: [["Copy of", 42], ["MRHT Lap...", 64]] },
  { icon: "none" },
  { icon: "brother", lines: [["Brother", 39]], link: true },
  { icon: "chrome", lines: [["Web Email", 56]], link: true },
  { icon: "images", lines: [["Images", 38]] },
  { icon: "alternate", lines: [["Alternate", 48]], link: true },
  { icon: "folder", lines: [["CPD Records", 68]], link: true },
];

export default function App() {
  return (
    <Desktop>
      <Global />
      <IconGrid $x={-66} $y={607} $cols={6}>
        {shortcuts.map((s, i) => <DesktopIcon key={i} {...s} icon={art[s.icon]} />)}
      </IconGrid>
      <IconGrid $x={922} $y={102} $cols={2}>
        <DesktopIcon icon={art.pdf} lines={[["invoice1.pdf", 65]]} />
        <DesktopIcon icon={art.pdf} lines={[["invoice2.pdf", 65]]} />
      </IconGrid>
      <IconGrid $x={1302} $y={102} $cols={1}>
        <DesktopIcon icon={art.network} lines={[["MRHP_War...", 69], ["(tdws08fs01...", 71]]} link />
      </IconGrid>
      <PatientWindow />
      <TestsWindow />
      <ErrorDialog />
    </Desktop>
  );
}
